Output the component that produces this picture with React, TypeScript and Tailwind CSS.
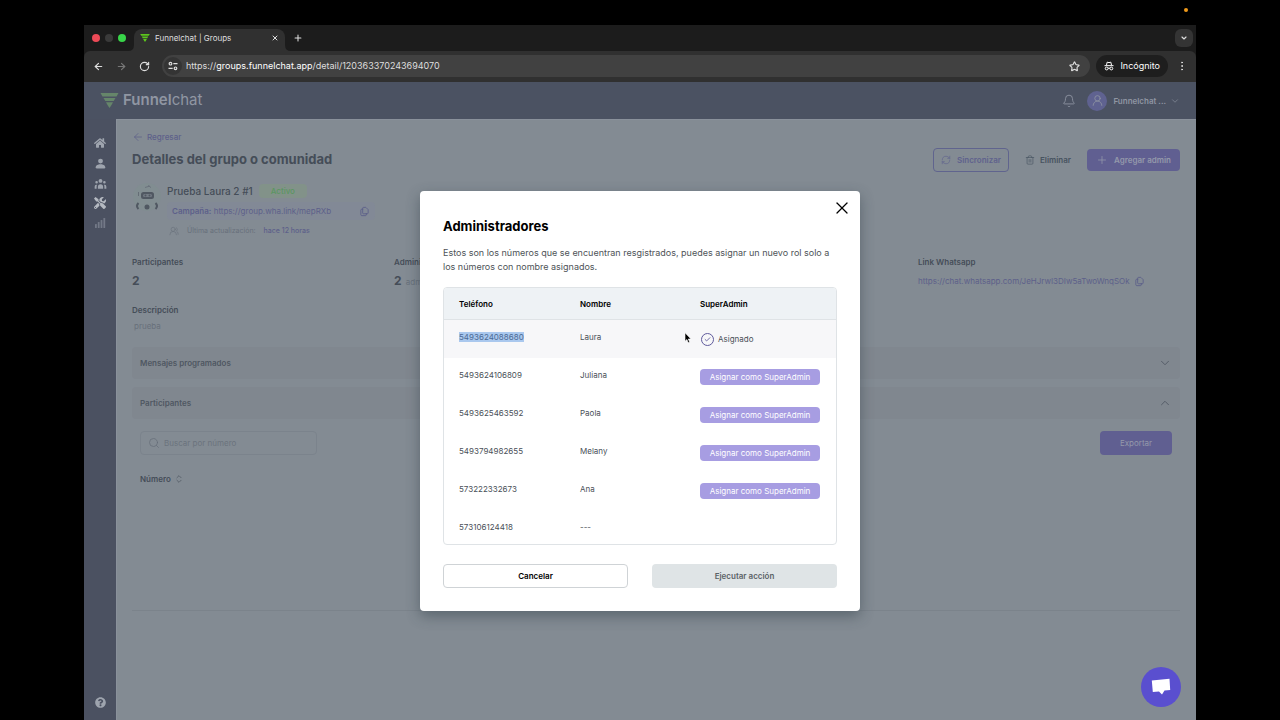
import type { ReactNode } from "react";
import { BsFillPersonFill } from "react-icons/bs";
import { FaHome, FaQuestionCircle, FaTools } from "react-icons/fa";
import { HiOutlineDocumentDuplicate, HiUserGroup } from "react-icons/hi";
import {
  ArrowLeft,
  ArrowRight,
  Bell,
  Check,
  ChevronDown,
  ChevronUp,
  ChevronsUpDown,
  EllipsisVertical,
  Plus,
  RefreshCw,
  RotateCw,
  Search,
  Star,
  Trash2,
  UserRound,
  UsersRound,
  X,
} from "lucide-react";

type Admin = {
  phone: string;
  name: string;
  status: "assigned" | "available" | "none";
};

const admins: Admin[] = [
  { phone: "5493624088680", name: "Laura", status: "assigned" },
  { phone: "5493624106809", name: "Juliana", status: "available" },
  { phone: "5493625463592", name: "Paola", status: "available" },
  { phone: "5493794982655", name: "Melany", status: "available" },
  { phone: "573222332673", name: "Ana", status: "available" },
  { phone: "573106124418", name: "---", status: "none" },
];

function FunnelLogo({ className }: { className: string }) {
  return (
    <svg viewBox="0 0 18 15" className={className} fill="currentColor" aria-hidden="true">
      <path d="M0 0h18l-2 3.500H2z" />
      <path d="M3 4.900h12l-1.800 3.100H4.800z" />
      <path d="M5.500 9.300h7L11 12l-2 3-2-3z" />
    </svg>
  );
}

function BarsIcon() {
  return (
    <svg viewBox="0 0 12 12" className="size-3" fill="currentColor" aria-hidden="true">
      <rect x="1" y="7" width="1.8" height="4" rx=".5" />
      <rect x="3.800" y="5" width="1.8" height="6" rx=".5" />
      <rect x="6.600" y="3" width="1.8" height="8" rx=".5" />
      <rect x="9.400" y="1" width="1.8" height="10" rx=".5" />
    </svg>
  );
}

function SiteSettingsIcon() {
  return (
    <svg viewBox="0 0 12 12" className="size-2.5" fill="none" stroke="currentColor" strokeWidth="1.4" aria-hidden="true">
      <circle cx="3" cy="3.2" r="1.6" />
      <path d="M6.4 3.2h5M.6 8.8h5" />
      <circle cx="9" cy="8.8" r="1.6" />
    </svg>
  );
}

function IncognitoIcon() {
  return (
    <svg viewBox="0 0 12 12" className="size-2.5" fill="none" stroke="currentColor" strokeWidth="1.2" aria-hidden="true">
      <path d="M3 5 3.8 1.4 6 2l2.2-.6L9 5M.6 5.6h10.8" />
      <circle cx="3.2" cy="9" r="1.7" />
      <circle cx="8.8" cy="9" r="1.7" />
      <path d="M4.9 8.8q1.1-.8 2.2 0" />
    </svg>
  );
}

function GroupAvatar() {
  return (
    <svg viewBox="0 0 30 32" className="h-8 w-[30px] shrink-0" aria-hidden="true">
      <circle cx="15" cy="15" r="14" fill="#818d91" />
      <path d="M13 5.500l5-1.500M16 3.500l3 2" stroke="#6a727c" strokeWidth="1" />
      <rect x="9" y="10" width="13" height="7" rx="2.500" fill="#505862" />
      <rect x="11" y="12" width="9" height="3" rx="1.500" fill="#737b84" />
      <circle cx="13.500" cy="13.500" r="1" fill="#505862" />
      <circle cx="17.500" cy="13.500" r="1" fill="#505862" />
      <path d="M6.500 10v4" stroke="#656d76" strokeWidth="1" />
      <path d="M6.500 21q-3 3 0 6M23.500 21q3 3 0 6" stroke="#505862" strokeWidth="2" fill="none" />
      <circle cx="15" cy="25" r="2.500" fill="#505862" />
    </svg>
  );
}

function PointerIcon({ className }: { className: string }) {
  return (
    <svg viewBox="0 0 8 12" className={className} aria-hidden="true">
      <path d="M1 .8v8.400l1.900-1.700 1.300 3.200 1.500-.7-1.400-3H7z" fill="#000" stroke="#fff" strokeWidth=".6" />
    </svg>
  );
}

function BrowserChrome() {
  return (
    <header className="bg-[#1c1c1c] text-[#dedede]">
      <div className="flex h-[26px] items-end pl-2 pr-[3px]">
        <div className="flex h-[26px] items-center gap-[5px]">
          <span className="size-2 rounded-full bg-[#ec4a57]" />
          <span className="size-2 rounded-full bg-[#3a3a3a]" />
          <span className="size-2 rounded-full bg-[#38d549]" />
        </div>
        <svg viewBox="0 0 6 6" className="ml-0.5 size-1.5" fill="#303030" aria-hidden="true">
          <path d="M6 0v6H0q6 0 6-6z" />
        </svg>
        <div className="flex h-[22px] w-[151px] items-center rounded-t-lg bg-[#303030] px-1.5 pb-1">
          <FunnelLogo className="h-2 w-2.5 text-[#5cc51c]" />
          <span className="ml-[5px] flex-1 text-[8px]">Funnelchat | Groups</span>
          <button aria-label="Cerrar pestaña">
            <X className="size-2" strokeWidth={3} />
          </button>
        </div>
        <svg viewBox="0 0 6 6" className="size-1.5" fill="#303030" aria-hidden="true">
          <path d="M0 0v6h6q-6 0-6-6z" />
        </svg>
        <button aria-label="Nueva pestaña" className="mb-2 ml-0.5">
          <Plus className="size-2.5" strokeWidth={2.5} />
        </button>
        <button
          aria-label="Buscar pestañas"
          className="mb-1 ml-auto flex size-[18px] items-center justify-center rounded-md bg-[#343434]"
        >
          <ChevronDown className="size-2" strokeWidth={3.5} />
        </button>
      </div>
      <div className="flex h-[31px] items-center rounded-t-md bg-[#303030] pb-px pl-[9px] pr-2">
        <button aria-label="Atrás">
          <ArrowLeft className="size-[11px]" strokeWidth={2.5} />
        </button>
        <button aria-label="Adelante" className="ml-3 text-[#777777]">
          <ArrowRight className="size-[11px]" strokeWidth={2.5} />
        </button>
        <button aria-label="Recargar" className="ml-3">
          <RotateCw className="size-[11px]" strokeWidth={2.5} />
        </button>
        <div className="ml-3 flex h-[22px] flex-1 items-center rounded-full bg-[#414141] pl-0.5 pr-2.5">
          <span className="flex size-[18px] items-center justify-center rounded-full bg-[#343434]">
            <SiteSettingsIcon />
          </span>
          <span className="ml-1 flex-1 text-[9px]">
            https://<span className="text-white">groups.funnelchat.app</span>/detail/120363370243694070
          </span>
          <button aria-label="Agregar a favoritos">
            <Star className="size-[11px]" strokeWidth={2.5} />
          </button>
        </div>
        <div className="ml-1.5 flex h-[22px] items-center gap-1.5 rounded-full bg-[#1e1e1e] px-2 text-[9px] text-white">
          <IncognitoIcon />
          Incógnito
        </div>
        <button aria-label="Menú" className="ml-2">
          <EllipsisVertical className="size-3" strokeWidth={2} />
        </button>
      </div>
    </header>
  );
}

function AppHeader() {
  return (
    <header className="flex h-[37px] items-center bg-[#4b5262] px-4 text-[#8f95a2]">
      <FunnelLogo className="h-[15px] w-[19px] text-[#66866a]" />
      <span className="ml-1 text-[15px] font-semibold text-[#9096a2]">
        Funnel<span className="font-normal">chat</span>
      </span>
      <button aria-label="Notificaciones" className="ml-auto">
        <Bell className="size-3.5" strokeWidth={1.5} />
      </button>
      <button className="ml-[11px] flex items-center text-[8px] font-semibold">
        <span className="mr-1.5 flex size-5 items-center justify-center rounded-full bg-[#5f6290]">
          <UserRound className="size-[13px]" strokeWidth={1.5} />
        </span>
        Funnelchat ...
        <ChevronDown className="ml-1 size-2.5" strokeWidth={1.5} />
      </button>
    </header>
  );
}

function Sidebar() {
  return (
    <nav className="flex w-8 shrink-0 flex-col items-center bg-[#4b5161] pb-3 pt-3.5 text-[#9ea4ae]">
      <a href="#inicio" aria-label="Inicio" className="flex h-5 items-center">
        <FaHome className="size-3" />
      </a>
      <a href="#contactos" aria-label="Contactos" className="flex h-5 items-center">
        <BsFillPersonFill className="size-[13px]" />
      </a>
      <a href="#grupos" aria-label="Grupos" className="flex h-5 items-center">
        <HiUserGroup className="size-[13px]" />
      </a>
      <a href="#herramientas" aria-label="Herramientas" className="flex h-5 items-center text-[#b4b9c1]">
        <FaTools className="size-3" />
      </a>
      <a href="#reportes" aria-label="Reportes" className="flex h-5 items-center text-[#737987]">
        <BarsIcon />
      </a>
      <a href="#ayuda" aria-label="Ayuda" className="mt-auto">
        <FaQuestionCircle className="size-[11px]" />
      </a>
    </nav>
  );
}

function PanelHeader({ title, icon }: { title: string; icon: ReactNode }) {
  return (
    <button className="flex h-8 w-full items-center justify-between rounded bg-[#80878f] px-2 text-left text-[8px] font-semibold text-[#4f5762]">
      {title}
      {icon}
    </button>
  );
}

function GroupDetail() {
  return (
    <main className="min-w-0 flex-1 overflow-hidden border-l border-t border-[#8a919b] bg-[#838b93] pl-[15px] pr-4 pt-[11px] text-[#454d58]">
      <a href="#regresar" className="flex h-3 items-center gap-[3px] text-[8px] font-medium text-[#5d608a]">
        <ArrowLeft className="size-3" strokeWidth={1.5} />
        Regresar
      </a>
      <div className="mt-[5px] flex h-6 items-center">
        <h1 className="flex-1 text-[13px] font-bold">Detalles del grupo o comunidad</h1>
        <button className="flex h-6 w-[76px] items-center justify-center gap-1.5 rounded-sm border border-[#60648e] text-[8px] font-semibold text-[#5f628d]">
          <RefreshCw className="size-2.5" strokeWidth={1.5} />
          Sincronizar
        </button>
        <button className="ml-4 flex h-6 items-center gap-[5px] text-[8px] font-semibold text-[#475360]">
          <Trash2 className="size-2.5" strokeWidth={1.5} />
          Eliminar
        </button>
        <button className="ml-4 flex h-[22px] w-[93px] items-center justify-center gap-1.5 rounded-sm bg-[#605f91] text-[8px] font-semibold text-[#9499ab]">
          <Plus className="size-3" strokeWidth={1.5} />
          Agregar admin
        </button>
      </div>

      <div className="mt-2.5 flex gap-[5px]">
        <GroupAvatar />
        <div className="flex flex-col gap-0.5">
          <div className="flex h-[18px] items-center gap-1.5">
            <span className="text-[10px] font-medium">Prueba Laura 2 #1</span>
            <span className="rounded bg-[#829289] px-3 text-[8px] font-medium leading-[14px] text-[#5b9662]">
              Activo
            </span>
          </div>
          <div className="flex h-[18px] items-center gap-7 rounded bg-[#81879a]/40 px-[5px] text-[8px] text-[#5d608a]">
            <span>
              <b className="font-semibold">Campaña:</b> https://group.wha.link/mepRXb
            </span>
            <button aria-label="Copiar enlace de campaña">
              <HiOutlineDocumentDuplicate className="size-[11px]" />
            </button>
          </div>
          <div className="flex h-[18px] items-center gap-2 px-0.5 text-[7px] text-[#68707b]">
            <UsersRound className="size-2.5" strokeWidth={1.5} />
            Última actualización:
            <span className="font-medium text-[#5d608a]">hace 12 horas</span>
          </div>
        </div>
      </div>

      <dl className="mt-4 grid grid-cols-4 text-[8px]">
        <div>
          <dt className="font-semibold leading-3">Participantes</dt>
          <dd className="mt-[5px] text-[12px] font-bold leading-4">2</dd>
        </div>
        <div>
          <dt className="font-semibold leading-3">Administradores</dt>
          <dd className="mt-[5px] leading-4 text-[#68707b]">
            <b className="mr-0.5 text-[12px] text-[#454d58]">2</b> admins
          </dd>
        </div>
        <div className="col-start-4">
          <dt className="font-semibold leading-3">Link Whatsapp</dt>
          <dd className="mt-[5px] flex h-4 items-center gap-1 text-[#5d608a]">
            <a href="#whatsapp">https://chat.whatsapp.com/JeHJrwI3DIw5aTwoWnqSOk</a>
            <button aria-label="Copiar enlace de Whatsapp">
              <HiOutlineDocumentDuplicate className="size-[11px]" />
            </button>
          </dd>
        </div>
      </dl>

      <h2 className="mt-3.5 text-[8px] font-semibold leading-3">Descripción</h2>
      <p className="mt-1 pl-0.5 text-[8px] leading-3 text-[#68707b]">prueba</p>

      <div className="mt-[15px] flex flex-col gap-2">
        <PanelHeader title="Mensajes programados" icon={<ChevronDown className="size-3.5" strokeWidth={1.5} />} />
        <PanelHeader title="Participantes" icon={<ChevronUp className="size-3.5" strokeWidth={1.5} />} />
      </div>
      <section className="h-[192px] border-b border-[#7b838b] px-2 pt-3">
        <div className="flex items-center justify-between">
          <label className="flex h-6 w-[177px] items-center gap-1 rounded border border-[#7b838c] px-[7px] text-[#656d78]">
            <Search className="size-3" strokeWidth={1.5} />
            <input
              aria-label="Buscar por número"
              placeholder="Buscar por número"
              className="min-w-0 flex-1 bg-transparent text-[8px] outline-none placeholder:text-[#6b737d]"
            />
          </label>
          <button className="h-6 w-[72px] rounded-sm bg-[#605f91] text-[8px] text-[#9499ab]">Exportar</button>
        </div>
        <button className="mt-[18px] flex h-3 items-center gap-[3px] text-[8px] font-semibold">
          Número
          <ChevronsUpDown className="size-2.5" strokeWidth={1.5} />
        </button>
      </section>
    </main>
  );
}

function SuperAdminCell({ status }: { status: Admin["status"] }) {
  if (status === "assigned") {
    return (
      <span className="flex h-4 items-center gap-1 pl-px">
        <span className="flex size-[13px] items-center justify-center rounded-full border border-[#5f5a9c] text-[#5f5a9c]">
          <Check className="size-[7px]" strokeWidth={3} />
        </span>
        Asignado
      </span>
    );
  }
  if (status === "available") {
    return (
      <button className="block h-4 w-[120px] rounded-sm bg-[#a79de2] text-[8px] text-white">
        Asignar como SuperAdmin
      </button>
    );
  }
  return null;
}

function AdminsDialog() {
  return (
    <div
      role="dialog"
      aria-labelledby="admins-title"
      className="relative w-[440px] rounded bg-white px-[23px] pb-[23px] pt-[25px] shadow-[0_5px_14px_rgba(40,55,65,0.45)]"
    >
      <button aria-label="Cerrar" className="absolute right-2 top-[7px] text-black">
        <X className="size-5" strokeWidth={1.5} />
      </button>
      <h2 id="admins-title" className="text-[13px] font-bold leading-5 text-black">
        Administradores
      </h2>
      <p className="mt-2.5 text-[9px] leading-[14px] text-[#4e5357]">
        Estos son los números que se encuentran resgistrados, puedes asignar un nuevo rol solo a los números con nombre
        asignados.
      </p>
      <div className="mt-[13px] overflow-hidden rounded border border-[#dfe3e6]">
        <table className="w-full table-fixed text-left text-[8px] leading-3 text-[#4a5058]">
          <thead className="bg-[#eef2f5] text-black">
            <tr className="h-8 border-b border-[#dfe3e6]">
              <th className="w-[120px] pl-[15px] font-semibold">Teléfono</th>
              <th className="w-[121px] pl-4 font-semibold">Nombre</th>
              <th className="pl-[15px] font-semibold">SuperAdmin</th>
            </tr>
          </thead>
          <tbody>
            {admins.map((admin) => (
              <tr key={admin.phone} className="align-top first:bg-[#f7f7f9]">
                <td className="py-[11px] pl-[15px]">
                  <span className={admin.status === "assigned" ? "bg-[#aac8ee] text-[#4c6a94]" : undefined}>
                    {admin.phone}
                  </span>
                </td>
                <td className="py-[11px] pl-4">{admin.name}</td>
                <td className="py-[11px] pl-[15px]">
                  <SuperAdminCell status={admin.status} />
                </td>
              </tr>
            ))}
          </tbody>
        </table>
      </div>
      <div className="mt-[19px] grid grid-cols-2 gap-6 text-[8px] font-semibold">
        <button className="h-6 rounded-sm border border-[#cfd3d6] text-black">Cancelar</button>
        <button className="h-6 rounded-sm bg-[#dfe4e6] text-[#5b6266]">Ejecutar acción</button>
      </div>
      <PointerIcon className="absolute left-[264px] top-[141px] h-3 w-2" />
    </div>
  );
}

export default function App() {
  return (
    <div className="flex h-screen flex-col bg-black px-[84px] font-['Inter',sans-serif]">
      <div className="flex h-[25px] shrink-0 justify-end px-2 pt-2">
        <span className="size-1 rounded-full bg-[#f09a1a]" />
      </div>
      <BrowserChrome />
      <div className="relative flex min-h-0 flex-1 flex-col">
        <AppHeader />
        <div className="flex min-h-0 flex-1">
          <Sidebar />
          <GroupDetail />
        </div>
        <div className="absolute inset-0 flex items-center justify-center">
          <AdminsDialog />
        </div>
        <button
          aria-label="Abrir chat"
          className="absolute bottom-[13px] right-[15px] flex size-10 items-center justify-center rounded-full bg-[#5a4fcf]"
        >
          <svg viewBox="0 0 20 18" className="h-[18px] w-5" fill="#fff" aria-hidden="true">
            <path d="M.8 2.500 18.500.800 19.200 12l-5.700.600-2.500 4-3-3.200-6.200.600z" />
          </svg>
        </button>
      </div>
    </div>
  );
}
